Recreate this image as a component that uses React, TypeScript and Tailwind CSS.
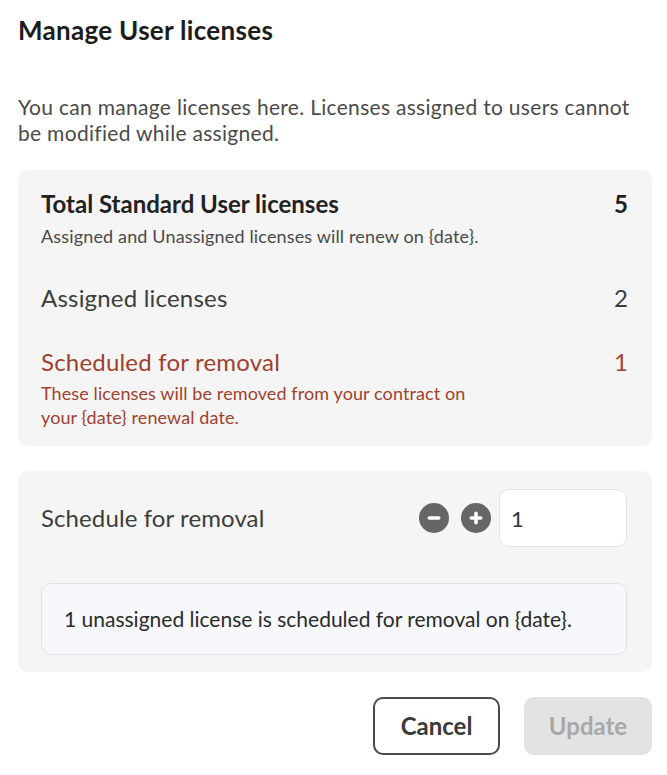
import { FC, useState } from "react";

const font = { fontFamily: "Lato, 'Noto Sans', sans-serif" };

const CircleIcon: FC<{ plus?: boolean }> = ({ plus }) => (
  <svg width="30" height="30" viewBox="0 0 30 30">
    <circle cx="15" cy="15" r="15" fill="#666666" />
    <rect x="8.5" y="13.2" width="13" height="3.6" rx="1.8" fill="#ffffff" />
    {plus && <rect x="13.2" y="8.5" width="3.6" height="13" rx="1.8" fill="#ffffff" />}
  </svg>
);

const App: FC = () => {
  const [count, setCount] = useState(1);

  return (
    <div className="min-h-[775px] bg-white pl-[18px] pr-[15px] pt-[14px] text-[#1f1f1f]" style={font}>
      <h1 className="text-[26px] font-bold leading-[32px] tracking-[0.3px] text-[#1c1c1c]">Manage User licenses</h1>

      <p className="mt-[48px] max-w-[625px] text-[21px] leading-[26px] tracking-[0.3px] text-[#4a4a4a]">
        You can manage licenses here. Licenses assigned to users cannot be modified while assigned.
      </p>

      <section className="mt-[24px] rounded-[10px] bg-[#f5f5f5] pl-[23px] pr-[24px] pt-[21px] pb-[17px]">
        <div className="flex items-center justify-between text-[24px] font-bold leading-[26px] text-[#222222]">
          <span>Total Standard User licenses</span>
          <span>5</span>
        </div>
        <p className="mt-[9px] text-[18px] leading-[20px] tracking-[0.15px] text-[#4a4a4a]">
          Assigned and Unassigned licenses will renew on {"{date}"}.
        </p>

        <div className="mt-[39px] flex items-center justify-between text-[24px] leading-[26px] tracking-[0.2px] text-[#3d3d3d]">
          <span>Assigned licenses</span>
          <span>2</span>
        </div>

        <div className="mt-[38px] flex items-center justify-between text-[24px] leading-[26px] tracking-[0.2px] text-[#a0412f]">
          <span>Scheduled for removal</span>
          <span>1</span>
        </div>
        <div className="mt-[7px] flex flex-col gap-[1px] text-[18px] leading-[23px] tracking-[0.1px] text-[#a0412f]">
          <span>These licenses will be removed from your contract on</span>
          <span>your {"{date}"} renewal date.</span>
        </div>
      </section>

      <section className="mt-[25px] rounded-[10px] bg-[#f5f5f5] pl-[23px] pr-[25px] pt-[18px] pb-[17px]">
        <div className="flex items-center justify-between">
          <span className="text-[24px] leading-[26px] tracking-[0.1px] text-[#3d3d3d]">Schedule for removal</span>
          <div className="flex items-center">
            <button className="mr-[12px]" onClick={() => setCount(Math.max(0, count - 1))}>
              <CircleIcon />
            </button>
            <button className="mr-[8px]" onClick={() => setCount(count + 1)}>
              <CircleIcon plus />
            </button>
            <div className="flex h-[58px] w-[128px] items-center rounded-[10px] border border-[#e3e3e3] bg-white px-[11px] text-[22px] text-[#333333]">
              {count}
            </div>
          </div>
        </div>

        <div className="mt-[36px] flex h-[72px] items-center rounded-[10px] border border-[#e2e2e2] bg-[#f7f8fc] px-[22px] text-[21px] text-[#2b2b2b]">
          {count} unassigned license is scheduled for removal on {"{date}"}.
        </div>
      </section>

      <div className="mt-[25px] flex justify-end gap-[24px]">
        <button className="h-[58px] w-[127px] rounded-[10px] border-2 border-[#4a4a4a] bg-white text-[24px] font-bold text-[#3a3a3a]">
          Cancel
        </button>
        <button className="h-[58px] w-[128px] rounded-[10px] bg-[#e3e3e3] text-[24px] font-bold text-[#a8a8a8]" disabled>
          Update
        </button>
      </div>
    </div>
  );
};

export default App;
